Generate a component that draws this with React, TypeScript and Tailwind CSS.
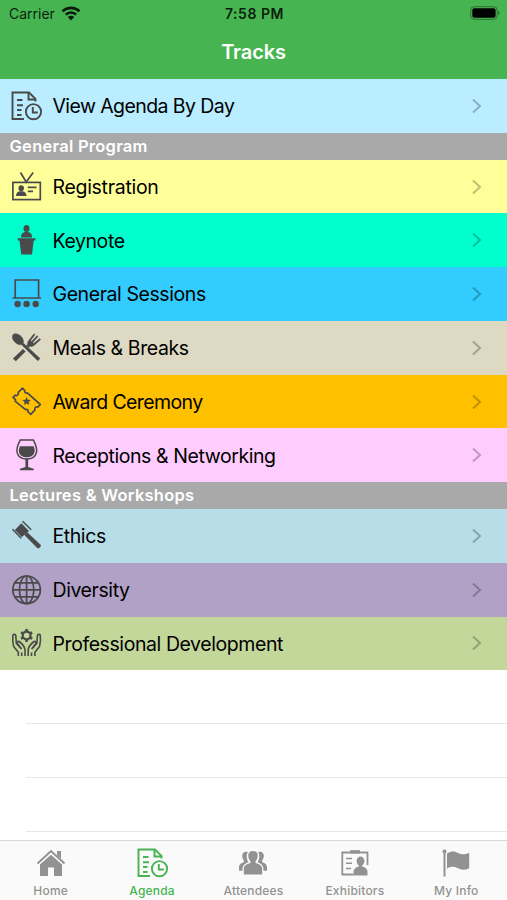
import type { ReactNode } from "react";

const ICON = "h-8 w-8 shrink-0";

function AgendaIcon({ className = ICON }: { className?: string }) {
  return (
    <svg viewBox="0 0 32 32" className={className} fill="none" stroke="currentColor" strokeWidth="1.9">
      <path d="M13 29H1.5V2.5H18L24.5 9V11.5" />
      <path d="M17.5 2.5V9.5H24.5" />
      <path d="M6 10h5.500M6 15.300h6M6 20h4.500M6 25h4.500" />
      <circle cx="22.5" cy="21.7" r="7.6" />
      <path d="M21.8 17v5.500h5" />
    </svg>
  );
}

function BadgeIcon() {
  return (
    <svg viewBox="0 0 32 32" className={ICON} fill="none" stroke="currentColor" strokeWidth="1.7">
      <rect x="1.9" y="11.400" width="27.400" height="17.200" />
      <path d="M9.500 1.500l5.700 9.500 7-9.500" />
      <path d="M16.800 16.300h8.700M16.800 20.300h5.200" />
      <ellipse cx="10.200" cy="17.300" rx="2.700" ry="3" fill="currentColor" stroke="none" />
      <path d="M5 25c0-3 1.400-4.200 3.900-4.700h2.600c2.400.5 4 1.700 4 4.700z" fill="currentColor" stroke="none" />
    </svg>
  );
}

function PodiumIcon() {
  return (
    <svg viewBox="0 0 32 32" className={ICON} fill="currentColor">
      <ellipse cx="15.500" cy="4.600" rx="3" ry="3.500" />
      <path d="M10 13.500c0-3.800 1.500-4.800 4-5.600h3c2.500.8 4 1.800 4 5.600z" />
      <path d="M6.800 14.300h17.600v2.200h-1.700L21 30.500H10.200L8.500 16.500H6.800z" />
    </svg>
  );
}

function ScreenIcon() {
  return (
    <svg viewBox="0 0 32 32" className={ICON} fill="currentColor">
      <path d="M4.200 20V2h23.400v18M1.500 20h28.500" fill="none" stroke="currentColor" strokeWidth="1.700" />
      <circle cx="6.600" cy="26" r="3.200" />
      <circle cx="15.600" cy="26" r="3.200" />
      <circle cx="24.700" cy="26" r="3.200" />
    </svg>
  );
}

function MealIcon() {
  return (
    <svg viewBox="0 0 32 32" className={ICON} fill="currentColor" stroke="currentColor" strokeWidth="0.500" strokeLinejoin="round">
      <path d="M2.200 2.400c1.800-1.600 5.500-.6 8 2 2 2.200 2.700 4.600 2 6.600L29 26.400l-2.200 2.400L10.400 12.600c-2.300.5-4.700-.5-6.600-2.600-2.400-2.600-3.200-6-1.600-7.600z" />
      <path d="M2.200 26.600L12 17.200l2.300 2.300L4.800 29z" />
      <path d="M16.700 12.800c-.4-2 .2-3.500 1.600-5L23 1.800l1 .8-4.400 5.800 1.100 1L26 3.700l1 .9-5.200 5.900 1 1 6-4.900.8 1-5.800 5.200c-1.500 1.400-3 1.900-4.900 1.400l-1.300 1.200-2.300-2z" />
    </svg>
  );
}

function TicketIcon() {
  return (
    <svg viewBox="0 0 32 32" className={ICON}>
      <path
        d="M2 11.300L4.300 9.200c1.500 1.200 3.900-1 2.900-2.800L11.500 2.200l2.300 2.300c-.6 1.600.9 3 2.500 2.400L29.300 18.500l-2.500 2.600c-1.700-1-3.800 1-2.800 2.800l-4.300 4.500-2.600-2.400c.5-1.600-.9-3-2.500-2.400L4.300 15.300c.5-1.300.1-2.200-.8-2.600z"
        fill="none"
        stroke="currentColor"
        strokeWidth="1.700"
        strokeLinejoin="round"
      />
      <path d="M15.600 11l1.200 2.700 3 .3-2.200 2 .6 3-2.600-1.500L13 19l.6-3-2.200-2 3-.3z" fill="currentColor" />
    </svg>
  );
}

function WineIcon() {
  return (
    <svg viewBox="0.700 0.500 30 30" className={ICON} fill="currentColor">
      <path
        d="M9.300 1.500h12.400c2.600 5 3.600 8.400 2.900 11.500-.9 3.900-4.200 6.200-9.100 6.200s-8.200-2.300-9.100-6.200C5.700 9.900 6.700 6.500 9.300 1.500z"
        fill="none"
        stroke="currentColor"
        strokeWidth="1.400"
      />
      <path d="M9.100 7.200h12.800c.9 2.200 1.300 4.100.8 5.900-.8 2.900-3.300 4.600-7.200 4.600s-6.400-1.700-7.200-4.600c-.5-1.800-.1-3.700.8-5.900z" />
      <path d="M14.200 19h2.600v7.800l5.200 1.600v1.500H9v-1.500l5.200-1.600z" />
    </svg>
  );
}

function GavelIcon() {
  return (
    <svg viewBox="0 0 32 32" className={ICON} fill="currentColor">
      <path d="M10.300 3.200l7.700 7.700-7.200 6.200-6.900-7.200z" />
      <path d="M11.500 1.200l8.700 8.500M1.500 9.300l8.700 9" fill="none" stroke="currentColor" strokeWidth="1.500" />
      <path d="M16.200 12.300l13.400 12.400c.8 1.600-1.300 4.200-3.200 3.500L13.400 15z" />
    </svg>
  );
}

function GlobeIcon() {
  return (
    <svg viewBox="0 0 32 32" className={ICON} fill="none" stroke="currentColor" strokeWidth="1.700">
      <circle cx="15.600" cy="15.800" r="13.800" />
      <ellipse cx="15.600" cy="15.800" rx="7.200" ry="13.800" />
      <path d="M15.600 2v27.600M1.800 15.800h27.600M3.700 8.800h23.800M3.700 22.800h23.800" />
    </svg>
  );
}

function HandsIcon() {
  return (
    <svg viewBox="0 0 32 32" className={ICON} fill="none" stroke="currentColor" strokeWidth="1.600" strokeLinejoin="round">
      <circle cx="15.600" cy="8.500" r="3.900" strokeWidth="2.200" />
      <path d="M15.600 2v2.600M15.600 12.400V15M10 5.300l2.200 1.200M19 10.500l2.200 1.200M10 11.700l2.200-1.200M19 6.500l2.200-1.200" strokeWidth="2.600" />
      <path d="M7.300 29v-3.800l-4.600-5.600C1.500 15.500 1.600 11 1.900 8.300c.6-1.400 2.600-1.200 2.900.2l.5 7.700 4.600 5.200M14 29v-6.500c-.5-3.500-3.200-6-5.800-8-1.600-.5-2.500.9-1.600 2.200l4 5.200M10.700 29v-3.500" />
      <path d="M23.900 29v-3.800l4.600-5.600c1.200-4.100 1.100-8.600.8-11.300-.6-1.400-2.600-1.200-2.900.2l-.5 7.700-4.600 5.200M17.200 29v-6.500c.5-3.500 3.200-6 5.800-8 1.600-.5 2.500.9 1.600 2.200l-4 5.200M20.500 29v-3.500" />
    </svg>
  );
}

type Track = { label: string; bg: string; icon: ReactNode; tracking?: string };

const PROGRAM: Track[] = [
  { label: "Registration", bg: "bg-[#ffff99]", icon: <BadgeIcon />, tracking: "tracking-[-0.300px]" },
  { label: "Keynote", bg: "bg-[#00ffcc]", icon: <PodiumIcon /> },
  { label: "General Sessions", bg: "bg-[#33ccff]", icon: <ScreenIcon /> },
  { label: "Meals & Breaks", bg: "bg-[#ddd9c3]", icon: <MealIcon /> },
  { label: "Award Ceremony", bg: "bg-[#ffc000]", icon: <TicketIcon />, tracking: "tracking-[-0.600px]" },
  { label: "Receptions & Networking", bg: "bg-[#ffccff]", icon: <WineIcon /> },
];

const LECTURES: Track[] = [
  { label: "Ethics", bg: "bg-[#b7dde8]", icon: <GavelIcon /> },
  { label: "Diversity", bg: "bg-[#b2a1c7]", icon: <GlobeIcon /> },
  { label: "Professional Development", bg: "bg-[#c4d79b]", icon: <HandsIcon /> },
];

function TrackRow({ label, bg, icon, tracking = "tracking-[-0.420px]" }: Track) {
  return (
    <button className={`flex h-[53.75px] w-full items-center pl-[11px] pr-[24px] text-left ${bg}`}>
      <span className="text-[#4a4a4a]">{icon}</span>
      <span className={`ml-[9.5px] flex-1 whitespace-nowrap pt-[2px] text-[19.5px] text-black ${tracking}`}>{label}</span>
      <svg viewBox="0 0 12 16" className="h-4 w-3 text-black/25" fill="none" stroke="currentColor" strokeWidth="2">
        <path d="M2 1.500l7 6.500-7 6.500" />
      </svg>
    </button>
  );
}

function SectionTitle({ children }: { children: ReactNode }) {
  return (
    <h2 className="flex h-[26.9px] items-center bg-[#a9a9a9] pl-[9.5px] text-[16.5px] font-semibold tracking-[0.26px] text-white">
      {children}
    </h2>
  );
}

const TABS = [
  {
    label: "Home",
    icon: (
      <svg viewBox="0 0 32 32" className="h-8 w-8" fill="currentColor">
        <path d="M16 7.800L27 17.500V29h-8v-8.500h-6V29H5V17.500z" />
        <path d="M2.500 16.500L16 4l13.500 12.500" fill="none" stroke="currentColor" strokeWidth="2" />
        <path d="M22 4h4v8l-4-3.700z" />
      </svg>
    ),
  },
  { label: "Agenda", icon: <AgendaIcon className="h-8 w-8 translate-x-px" /> },
  {
    label: "Attendees",
    icon: (
      <svg viewBox="0 0 32 32" className="h-8 w-8" fill="currentColor">
        <path d="M16 4c3.500 0 5 2.300 4.700 5.300-.2 2-1 3.800-2.100 4.800v1.800c4 1.200 6.600 2.500 6.600 6.100v5.600H6.800V22c0-3.600 2.600-4.900 6.600-6.100v-1.800c-1.100-1-1.900-2.800-2.100-4.800C11 6.300 12.500 4 16 4z" />
        <path d="M10.800 5C7.200 3.800 4.800 6 5.200 9.500c.2 1.800.9 3.200 1.700 4v1.500C3.800 16.200 2 17.500 2 20.300v3.500h3.400c-.1-4.700 1.800-6.900 6.100-8.500-1.800-2.600-2.600-7-.7-10.300zM21.200 5c3.600-1.200 6 1 5.600 4.500-.2 1.800-.9 3.200-1.700 4v1.500c3.100 1.200 4.900 2.500 4.900 5.300v3.500h-3.400c.1-4.700-1.800-6.900-6.100-8.500 1.800-2.600 2.600-7 .7-10.300z" />
      </svg>
    ),
  },
  {
    label: "Exhibitors",
    icon: (
      <svg viewBox="0 0 32 32" className="h-8 w-8" fill="currentColor">
        <path d="M14.500 27.500H3.300V5.500h25.200V18" fill="none" stroke="currentColor" strokeWidth="1.800" />
        <path d="M11 3.200h10v3.300H11z" />
        <path d="M7 11.500h6M7 16.300h6M7 21.500h5" fill="none" stroke="currentColor" strokeWidth="1.600" />
        <ellipse cx="21.500" cy="14" rx="3.900" ry="4.600" />
        <path d="M14.500 28.500V25c0-3 2-4.500 5.300-5.400V17h3.400v2.600c3.300.9 5.300 2.400 5.300 5.400v3.500z" />
      </svg>
    ),
  },
  {
    label: "My Info",
    icon: (
      <svg viewBox="0 0 32 32" className="h-8 w-8" fill="currentColor">
        <circle cx="4.500" cy="4.500" r="2" />
        <path d="M3.500 5h2v24.500h-2z" />
        <path d="M7 6.500c4-3 8-2.500 11-.5 4 2 7 1.500 11.200-.3v15.500c-4 2-7.700 2-11.200.100-4-2-7.500-2-11 .400z" />
      </svg>
    ),
  },
];

export default function App() {
  return (
    <div className="flex h-[900px] w-[507px] flex-col overflow-hidden bg-white font-['Inter','Liberation_Sans',sans-serif]">
      <header className="h-[79px] shrink-0 bg-[#46b450]">
        <div className="grid h-[27px] grid-cols-3 items-center pl-[9px] pr-[7px] text-[14px] text-black/85">
          <div className="flex items-center gap-[6px]">
            <span>Carrier</span>
            <svg viewBox="0 0 20 15" className="h-[15px] w-5" fill="none" stroke="currentColor" strokeWidth="2.600">
              <path d="M1.500 5.300c4.700-4.600 12.300-4.600 17 0M4.800 8.700c2.900-2.900 7.500-2.900 10.400 0" />
              <path d="M10 14.500l-3.200-3.400c1.900-1.700 4.500-1.700 6.400 0z" fill="currentColor" stroke="none" />
            </svg>
          </div>
          <span className="text-center font-semibold tracking-[0.55px]">7:58 PM</span>
          <svg viewBox="0 0 30 14" className="h-[14px] w-[30px] -translate-y-px justify-self-end">
            <rect x="0.700" y="0.700" width="26.500" height="12.600" rx="3.500" fill="none" stroke="currentColor" strokeOpacity="0.450" />
            <rect x="2.300" y="2.300" width="23.300" height="9.400" rx="2" fill="black" />
            <path d="M28.400 4.800c1.600.8 1.600 3.600 0 4.400z" fill="currentColor" fillOpacity="0.500" />
          </svg>
        </div>
        <h1 className="pt-[10px] text-center text-[20px] leading-[30px] font-semibold tracking-[-0.1px] text-white">Tracks</h1>
      </header>

      <main className="flex-1 overflow-hidden">
        <TrackRow label="View Agenda By Day" bg="bg-[#b9edff]" icon={<AgendaIcon />} tracking="tracking-[-0.580px]" />
        <SectionTitle>General Program</SectionTitle>
        {PROGRAM.map((t) => (
          <TrackRow key={t.label} {...t} />
        ))}
        <SectionTitle>Lectures &amp; Workshops</SectionTitle>
        {LECTURES.map((t) => (
          <TrackRow key={t.label} {...t} />
        ))}
        <div className="ml-[26px]">
          <div className="h-[53.75px] border-b border-[#e6e6e8]" />
          <div className="h-[53.75px] border-b border-[#e6e6e8]" />
          <div className="h-[53.75px] border-b border-[#e6e6e8]" />
        </div>
      </main>

      <nav className="grid h-[60px] shrink-0 grid-cols-5 border-t border-[#d8d8d8] bg-[#fafafa]">
        {TABS.map((tab) => (
          <button
            key={tab.label}
            className={`flex flex-col items-center pt-[6px] ${tab.label === "Agenda" ? "text-[#46b450]" : "text-[#929292]"}`}
          >
            {tab.icon}
            <span className="mt-[3px] text-[12px] leading-[18px] font-medium tracking-[0.2px]">{tab.label}</span>
          </button>
        ))}
      </nav>
    </div>
  );
}
